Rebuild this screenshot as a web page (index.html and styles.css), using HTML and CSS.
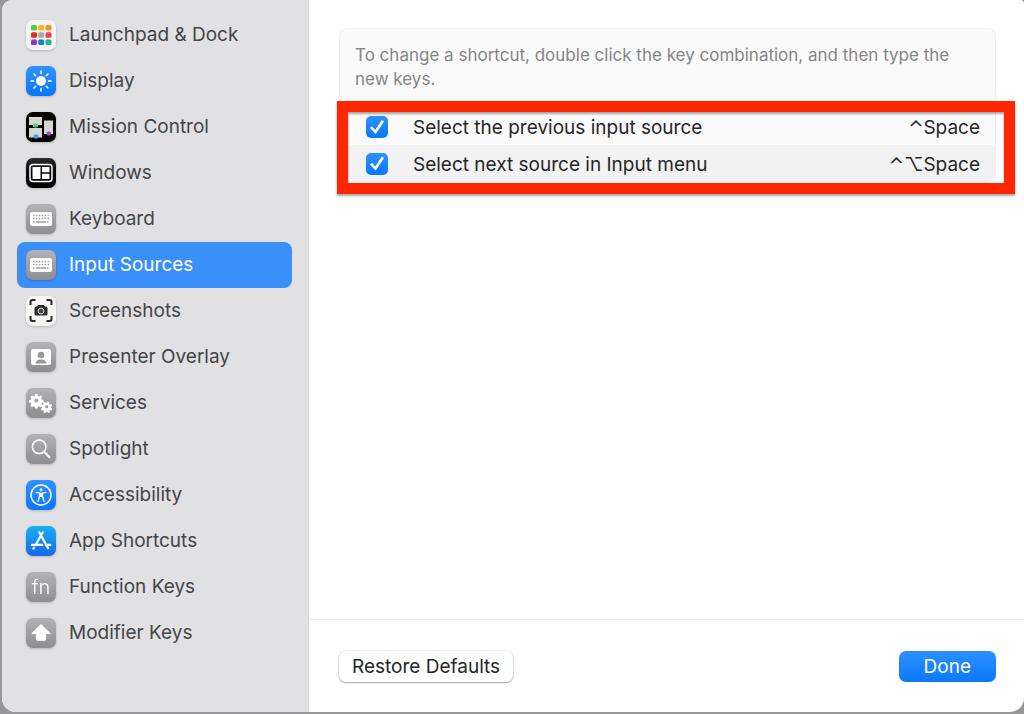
FILE: index.html
```html
<!DOCTYPE html>
<html lang="en">
<head>
<meta charset="utf-8">
<title>Keyboard Shortcuts</title>
<link rel="stylesheet" href="styles.css">
</head>
<body>
<svg class="defs" width="0" height="0" aria-hidden="true">
  <defs>
    <linearGradient id="gray" x1="0" y1="0" x2="0" y2="1"><stop offset="0" stop-color="#b3b3b7"/><stop offset="1" stop-color="#8d8d92"/></linearGradient>
    <linearGradient id="blue" x1="0" y1="0" x2="0" y2="1"><stop offset="0" stop-color="#2f92ff"/><stop offset="1" stop-color="#0a76fa"/></linearGradient>
    <linearGradient id="store" x1="0" y1="0" x2="0" y2="1"><stop offset="0" stop-color="#19b1f5"/><stop offset="1" stop-color="#1668e6"/></linearGradient>
    <linearGradient id="black" x1="0" y1="0" x2="0" y2="1"><stop offset="0" stop-color="#2c2c2c"/><stop offset="0.5" stop-color="#050505"/><stop offset="1" stop-color="#000"/></linearGradient>
    <g id="keys">
      <rect width="30" height="30" rx="7" fill="url(#gray)"/>
      <rect x="4" y="8" width="22" height="14" rx="2" fill="#fff"/>
      <path d="M7 11.5h16M7 14.5h16M7 18h2M21 18h2" stroke="#98989c" stroke-width="1.5" stroke-dasharray="1.5 1.4"/>
      <path d="M10 18h10" stroke="#98989c" stroke-width="1.4"/>
    </g>
    <path id="gear" fill-rule="evenodd" d="M-1.2-6.2h2.4l.4 1.8 1.2.5 1.5-1 1.7 1.7-1 1.5.5 1.2 1.8.3v2.4l-1.8.3-.5 1.2 1 1.500-1.700 1.700-1.500-1-1.200.5-.4 1.800h-2.400l-.4-1.800-1.200-.5-1.500 1-1.700-1.700 1-1.500-.5-1.200-1.800-.3v-2.400l1.800-.3.5-1.200-1-1.500 1.700-1.700 1.500 1 1.200-.5zM0-1.700a2 2 0 1 0 .01 0z"/>
  </defs>
</svg>
<div class="window">
  <nav class="sidebar" aria-label="Shortcut categories">
    <a class="item" href="#launchpad">
      <svg class="icon" viewBox="0 0 30 30"><rect width="30" height="30" rx="7" fill="#f5f5f6"/><g><rect x="5" y="5" width="6" height="5.500" rx="1.500" fill="#54cf4d"/><rect x="12.200" y="5" width="6" height="5.500" rx="1.500" fill="#fcb527"/><rect x="19.500" y="5" width="6" height="5.500" rx="1.500" fill="#f2951d"/><rect x="5" y="12.200" width="6" height="5.500" rx="1.500" fill="#e12b23"/><rect x="12.200" y="12.200" width="6" height="5.500" rx="1.500" fill="#a3a9a9"/><rect x="19.500" y="12.200" width="6" height="5.500" rx="1.500" fill="#f23b59"/><rect x="5" y="19.500" width="6" height="5.500" rx="1.500" fill="#9637c8"/><rect x="12.200" y="19.500" width="6" height="5.500" rx="1.500" fill="#1682d5"/><rect x="19.500" y="19.500" width="6" height="5.500" rx="1.500" fill="#25b58b"/></g></svg>
      <span>Launchpad &amp; Dock</span></a>
    <a class="item" href="#display">
      <svg class="icon" viewBox="0 0 30 30"><rect width="30" height="30" rx="7" fill="url(#blue)"/><circle cx="15" cy="15" r="5" fill="#fff"/><path d="M15 5v2.600M15 22.400v2.600M5 15h2.600M22.400 15h2.600M8 8l1.700 1.700M20.300 20.300l1.700 1.700M8 22l1.700-1.700M20.300 9.700l1.700-1.700" stroke="#fff" stroke-width="1.500" stroke-linecap="round"/></svg>
      <span>Display</span></a>
    <a class="item" href="#mission">
      <svg class="icon" viewBox="0 0 30 30"><rect width="30" height="30" rx="7" fill="#000"/><path fill="#d6d6d2" d="M3 5h13v8H3zM3 16h13v9.500H3zM18 8.500h9v13.500h-9z"/><rect x="7" y="11.500" width="5" height="4" rx="1.500" fill="#43d763"/><rect x="7.500" y="22.500" width="5" height="4" rx="1.500" fill="#36a4f3"/><rect x="20.500" y="19.500" width="4.500" height="4" rx="1.500" fill="#a34ed5"/></svg>
      <span>Mission Control</span></a>
    <a class="item" href="#windows">
      <svg class="icon" viewBox="0 0 30 30"><rect width="30" height="30" rx="7" fill="url(#black)"/><rect x="4" y="6.500" width="22" height="17" rx="3" fill="none" stroke="#fff" stroke-width="1.500"/><path fill="#fff" d="M6.500 9h8v12h-8zM16 9h7.500v5.200H16zM16 15.800h7.500v5.200H16z"/></svg>
      <span>Windows</span></a>
    <a class="item" href="#keyboard">
      <svg class="icon" viewBox="0 0 30 30"><use href="#keys"/></svg>
      <span>Keyboard</span></a>
    <a class="item selected" href="#input-sources" aria-current="page">
      <svg class="icon" viewBox="0 0 30 30"><use href="#keys"/></svg>
      <span>Input Sources</span></a>
    <a class="item" href="#screenshots">
      <svg class="icon" viewBox="0 0 30 30"><rect width="30" height="30" rx="7" fill="#f7f7f6"/><path d="M4.500 9V6q0-2 2-2h3M20.500 4h3q2 0 2 2v3M25.500 20v3q0 2-2 2h-3M9.500 25h-3q-2 0-2-2v-3" fill="none" stroke="#2b2b2b" stroke-width="2"/><path d="M11 10.500l1-1.500h6l1 1.500h1q1.500 0 1.500 1.500v6q0 1.500-1.500 1.500H10q-1.500 0-1.500-1.500v-6q0-1.500 1.500-1.500z" fill="#2b2b2b"/><circle cx="15" cy="15" r="2.900" fill="#444" stroke="#ddd" stroke-width="1"/></svg>
      <span>Screenshots</span></a>
    <a class="item" href="#presenter">
      <svg class="icon" viewBox="0 0 30 30"><rect width="30" height="30" rx="7" fill="url(#gray)"/><rect x="5" y="7" width="20" height="16" rx="2" fill="#fff"/><circle cx="15" cy="13" r="3.300" fill="#98989d"/><path d="M9.500 21.500q.5-4 5.500-4t5.500 4z" fill="#98989d"/></svg>
      <span>Presenter Overlay</span></a>
    <a class="item" href="#services">
      <svg class="icon" viewBox="0 0 30 30"><rect width="30" height="30" rx="7" fill="url(#gray)"/><use href="#gear" transform="translate(10.300 12.300)" fill="#fff"/><use href="#gear" transform="translate(20.800 18.600) rotate(20) scale(.8)" fill="#fff"/></svg>
      <span>Services</span></a>
    <a class="item" href="#spotlight">
      <svg class="icon" viewBox="0 0 30 30"><rect width="30" height="30" rx="7" fill="url(#gray)"/><circle cx="13.200" cy="12.800" r="6.800" fill="none" stroke="#fff" stroke-width="1.500"/><path d="M18.300 18l5.200 5.200" stroke="#fff" stroke-width="2" stroke-linecap="round"/></svg>
      <span>Spotlight</span></a>
    <a class="item" href="#accessibility">
      <svg class="icon" viewBox="0 0 30 30"><rect width="30" height="30" rx="7" fill="url(#blue)"/><circle cx="15" cy="15" r="10" fill="none" stroke="#fff" stroke-width="1.500"/><circle cx="15" cy="9.700" r="1.500" fill="#fff"/><path d="M10 12.400l3.500.8v3l-1.500 5.200M20 12.400l-3.500.8v3l1.500 5.200" fill="none" stroke="#fff" stroke-width="1.300" stroke-linecap="round" stroke-linejoin="round"/><path d="M13.200 12.700h3.600v4.200h-3.600z" fill="#fff"/></svg>
      <span>Accessibility</span></a>
    <a class="item" href="#app-shortcuts">
      <svg class="icon" viewBox="0 0 30 30"><rect width="30" height="30" rx="7" fill="url(#store)"/><path d="M13.300 6.500l8.900 15.700M16.700 6.500l-7 12.200M5.800 18.900h10.400M19.800 18.900h4.500M8 21.600l-.5.900" stroke="#fff" stroke-width="2.200" stroke-linecap="round"/></svg>
      <span>App Shortcuts</span></a>
    <a class="item" href="#function-keys">
      <svg class="icon" viewBox="0 0 30 30"><rect width="30" height="30" rx="7" fill="url(#gray)"/><text class="fn" x="15" y="22" text-anchor="middle">fn</text></svg>
      <span>Function Keys</span></a>
    <a class="item" href="#modifier-keys">
      <svg class="icon" viewBox="0 0 30 30"><rect width="30" height="30" rx="7" fill="url(#gray)"/><path d="M15 6.500l9.200 9h-4.500v5.800q0 1-1 1h-7.400q-1 0-1-1v-5.800H5.800z" fill="#fff" stroke="#fff" stroke-width="1" stroke-linejoin="round"/></svg>
      <span>Modifier Keys</span></a>
  </nav>
  <main class="content">
    <section class="panel">
      <p class="hint">To change a shortcut, double click the key combination, and then type the new keys.</p>
      <ul class="shortcuts">
        <li class="row"><input class="check" type="checkbox" id="previous" checked><label class="name" for="previous">Select the previous input source</label><kbd class="combo">⌃Space</kbd></li>
        <li class="row"><input class="check" type="checkbox" id="next" checked><label class="name" for="next">Select next source in Input menu</label><kbd class="combo">⌃⌥Space</kbd></li>
      </ul>
    </section>
    <footer class="footer">
      <button class="button" type="button">Restore Defaults</button>
      <button class="button primary" type="button">Done</button>
    </footer>
  </main>
</div>
</body>
</html>
```
FILE: styles.css
```css
* { box-sizing: border-box; }

body {
  margin: 0;
  min-height: 100vh;
  display: flex;
  padding: 0 0 2px 2px;
  background: #97979a;
  color: #262626;
  font-family: Inter, "Liberation Sans", "DejaVu Sans", sans-serif;
  font-size: 19px;
  font-optical-sizing: none;
  line-height: 24px;
}

.defs { position: absolute; }

.window {
  flex: 1;
  display: flex;
  overflow: hidden;
  border-radius: 10px 4px 14px 14px;
  background: #fff;
}

.sidebar {
  flex: none;
  width: 307px;
  padding: 12px 16px 12px 15px;
  background: #e1e1e4;
  border-right: 1px solid #d8d8da;
}

.item {
  display: flex;
  align-items: center;
  gap: 13px;
  height: 46px;
  padding: 0 9px;
  border-radius: 8px;
  color: #454547;
  text-decoration: none;
}

.selected {
  background: #3b8ff8;
  color: #fff;
}

.icon {
  flex: none;
  width: 30px;
  height: 30px;
  overflow: visible;
  filter: drop-shadow(0 1px 1px rgba(0, 0, 0, 0.2));
}

.fn {
  fill: #fff;
  font-size: 20px;
  font-weight: 300;
}

.content {
  flex: 1;
  display: flex;
  flex-direction: column;
}

.panel {
  margin: 28px 28px 0 30px;
  border: 1px solid #f0f0f0;
  border-radius: 8px;
  background: #fafafa;
}

.hint {
  margin: 0;
  padding: 14px 15px 18px;
  color: #858585;
  font-size: 17px;
}

.shortcuts {
  position: relative;
  margin: 0;
  padding: 0;
  list-style: none;
}

/* Highlight frame drawn over the shortcut list */
.shortcuts::after {
  content: "";
  position: absolute;
  inset: -8px -20px -12px -3px;
  border: 11px solid #ff2600;
  filter: drop-shadow(0 2px 1px rgba(0, 0, 0, 0.35));
  pointer-events: none;
}

.row {
  display: flex;
  align-items: center;
  height: 36px;
  padding: 0 15px 0 26px;
}

.row:last-child {
  height: 37px;
  border-radius: 0 0 8px 8px;
  background: #f2f2f2;
}

.check {
  appearance: none;
  width: 22px;
  height: 22px;
  margin: 0;
  border-radius: 5px;
  background: linear-gradient(#2e91ff, #0a78fa);
  display: grid;
  place-items: center;
}

.check:checked::before {
  content: "";
  width: 16px;
  height: 16px;
  background: #fff;
  clip-path: polygon(6% 57%, 19% 46%, 39% 68%, 80% 6%, 94% 15%, 42% 94%);
}

.name {
  flex: 1;
  padding: 2px 0 0 25px;
}

.combo {
  padding-top: 2px;
  font: inherit;
}

.footer {
  display: flex;
  justify-content: space-between;
  margin-top: auto;
  padding: 31px 28px 30px 30px;
  border-top: 1px solid #ececec;
}

.button {
  height: 31px;
  padding: 0 13px;
  border: 0;
  border-radius: 7px;
  background: #fff;
  box-shadow: 0 0 0 1px rgba(0, 0, 0, 0.06), 0 1px 2px rgba(0, 0, 0, 0.3);
  color: #262626;
  font: inherit;
}

.primary {
  padding: 0 25px;
  background: linear-gradient(#2e91ff, #0a78fa);
  box-shadow: none;
  color: #fff;
}
```
